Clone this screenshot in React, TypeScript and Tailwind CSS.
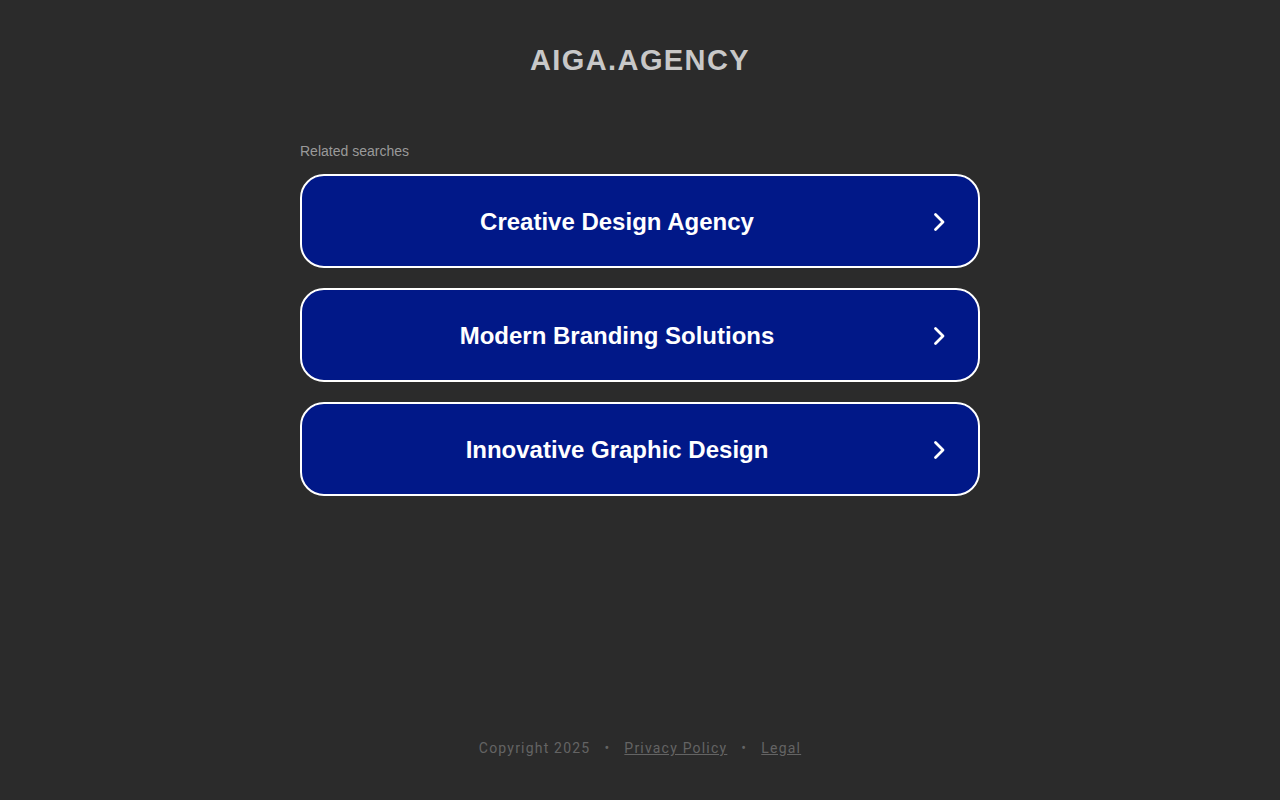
import React from "react";

const items = ["Creative Design Agency", "Modern Branding Solutions", "Innovative Graphic Design"];

function Chevron() {
  return (
    <svg width="16" height="24" viewBox="0 0 16 24" fill="none">
      <path d="M3.5 4.5 L11 12 L3.5 19.5" stroke="white" strokeWidth="2.8" strokeLinecap="round" strokeLinejoin="round" />
    </svg>
  );
}

export default function App() {
  return (
    <div className="min-h-[800px] bg-[#2b2b2b] flex flex-col items-center" style={{ fontFamily: "Arial, 'Liberation Sans', sans-serif" }}>
      <h1 className="mt-[41px] text-[29px] leading-[38px] font-bold tracking-[1.4px] text-[#c8c8c8] font-['Liberation_Sans',Arial,sans-serif]">AIGA.AGENCY</h1>
      <div className="w-[680px] mt-[64px]">
        <div className="text-[14px] leading-[16px] text-[#9a9a9a] font-['Liberation_Sans',Arial,sans-serif]">Related searches</div>
        <div className="mt-[15px] flex flex-col gap-[20px]">
          {items.map((t) => (
            <div key={t} className="h-[94px] rounded-[24px] border-2 border-white bg-[#011888] flex items-center">
              <div className="flex-1 text-center text-white font-bold text-[24px] pt-[2px] font-['Liberation_Sans',Arial,sans-serif]">{t}</div>
              <div className="w-[16px] mr-[30px] pt-[1px] flex items-center"><Chevron /></div>
            </div>
          ))}
        </div>
      </div>
      <div className="flex-1" />
      <div className="mb-[44px] mt-auto flex items-center text-[14px] leading-[16px] tracking-[1.2px] text-[#646464] font-['Roboto',sans-serif] pt-[236px]">
        <span>Copyright 2025</span>
        <span className="mx-[14px]">•</span>
        <a className="underline" href="#">Privacy Policy</a>
        <span className="mx-[14px]">•</span>
        <a className="underline" href="#">Legal</a>
      </div>
    </div>
  );
}
